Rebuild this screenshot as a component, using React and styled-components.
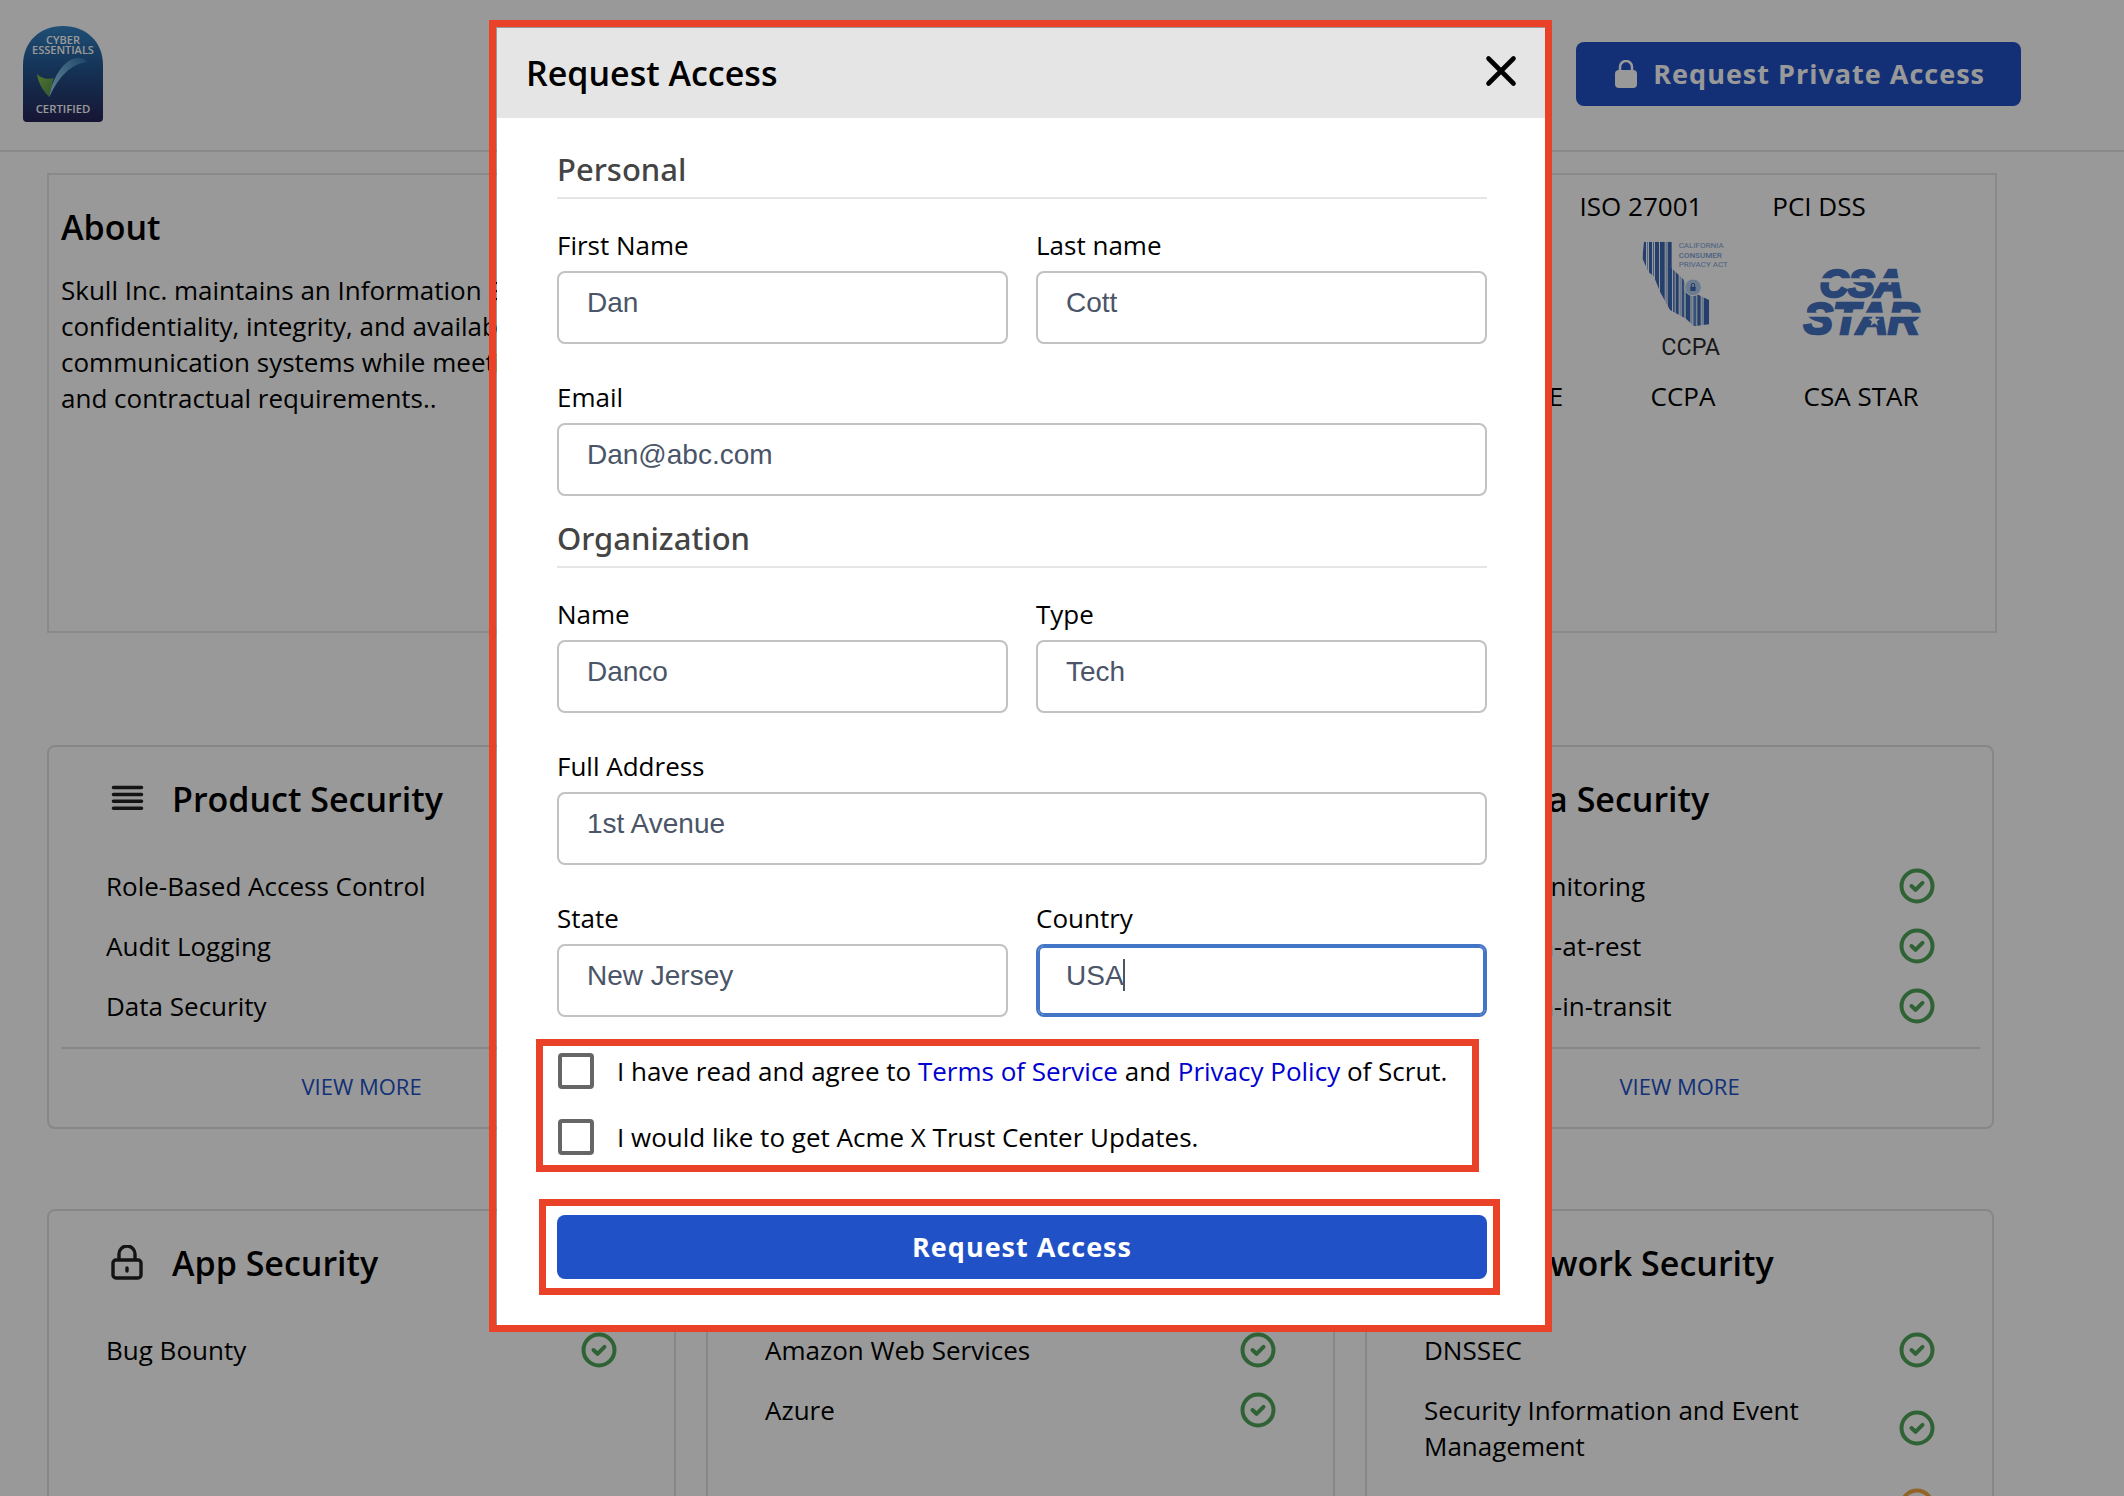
import React from "react";
import styled, { createGlobalStyle } from "styled-components";

const GlobalStyle = createGlobalStyle`
  *, *::before, *::after { box-sizing: border-box; }
  body {
    margin: 0;
    background: #fff;
    color: #000;
    font-family: "Open Sans", "Noto Sans", sans-serif;
    font-size: 26px;
    line-height: 36px;
    overflow: hidden;
  }
  h1, h2, h3, p, ul { margin: 0; padding: 0; }
  button, input { font: inherit; margin: 0; }
  svg { flex-shrink: 0; }
`;

const Page = styled.div`
  height: 100vh;
  overflow: hidden;
`;

/* ---------- top bar ---------- */

const TopBar = styled.header`
  display: flex;
  align-items: center;
  justify-content: space-between;
  padding: 26px 103px 28px 23px;
  border-bottom: 2px solid #e5e5e5;
`;

const PrimaryButton = styled.button`
  display: flex;
  align-items: center;
  justify-content: center;
  gap: 16px;
  width: ${(p) => (p.$block ? "100%" : "auto")};
  height: 64px;
  padding: ${(p) => (p.$block ? "0" : "0 36px 0 39px")};
  border: 0;
  border-radius: 8px;
  background: #2151c6;
  color: #fff;
  font-size: 27px;
  font-weight: 700;
  letter-spacing: 1px;
  cursor: pointer;
`;

/* ---------- page content ---------- */

const Content = styled.main`
  padding: 21px 127px 0 47px;
`;

const Overview = styled.section`
  display: flex;
  justify-content: space-between;
  min-height: 460px;
  margin-bottom: 112px;
  border: 2px solid #e5e5e5;
`;

const About = styled.div`
  padding: 29px 12px;
`;

const Title = styled.h2`
  font-size: 34px;
  line-height: 46px;
  font-weight: 600;
`;

const AboutText = styled.p`
  margin-top: 22px;
`;

const Badges = styled.div`
  display: flex;
  flex-direction: column;
  gap: 16px;
  padding-top: 13px;
`;

const BadgeRow = styled.div`
  display: flex;
  justify-content: flex-end;
  padding-right: ${(p) => (p.$indent ? 87 : 45)}px;
`;

const Badge = styled.div`
  display: flex;
  flex-direction: column;
  align-items: center;
  justify-content: flex-end;
  gap: 18px;
  width: 178px;
`;

const CardGrid = styled.section`
  display: grid;
  grid-template-columns: repeat(3, 1fr);
  gap: 80px 30px;
  padding-right: 3px;
`;

const Card = styled.article`
  padding: 29px 12px 26px;
  min-height: 384px;
  border: 2px solid #e2e2e2;
  border-radius: 8px;
`;

const CardHead = styled.div`
  display: flex;
  align-items: center;
  gap: 27px;
  padding-left: 48px;
  margin-bottom: 46px;
`;

const CardList = styled.ul`
  display: flex;
  flex-direction: column;
  gap: 24px;
  padding: 0 45px;
  list-style: none;
`;

const CardItem = styled.li`
  display: flex;
  align-items: center;
  justify-content: space-between;
  gap: 80px;
`;

const CardFoot = styled.div`
  display: flex;
  justify-content: center;
  margin-top: 23px;
  padding-top: 22px;
  border-top: 2px solid #e2e2e2;
`;

const MoreLink = styled.a`
  color: #2151c6;
  font-size: 22px;
  line-height: 30px;
  text-decoration: none;
`;

/* ---------- dialog ---------- */

const Overlay = styled.div`
  position: fixed;
  inset: 0;
  display: flex;
  justify-content: center;
  align-items: flex-start;
  padding: 20px 83px 0 0;
  background: rgba(0, 0, 0, 0.4);
`;

const Dialog = styled.div`
  width: 1063px;
  max-width: 100%;
  padding: 1px 0 0 1px;
  border: 7px solid #ea4228;
`;

const DialogHead = styled.div`
  display: flex;
  align-items: center;
  justify-content: space-between;
  height: 90px;
  padding: 0 28px 0 29px;
  background: #e5e5e5;
`;

const CloseButton = styled.button`
  display: flex;
  padding: 0 0 4px;
  border: 0;
  background: none;
  cursor: pointer;
`;

const Form = styled.form`
  padding: 29px 58px 30px 60px;
  background: #fff;
`;

const Section = styled.section`
  margin-bottom: 20px;
`;

const SectionTitle = styled.h3`
  margin-bottom: 28px;
  padding-bottom: 6px;
  border-bottom: 2px solid #e5e5e5;
  color: #444;
  font-family: "Noto Sans", "Open Sans", sans-serif;
  font-size: 31px;
  line-height: 44px;
  font-weight: 500;
`;

const Fields = styled.div`
  display: grid;
  grid-template-columns: 1fr 1fr;
  gap: 35px 28px;
`;

const Field = styled.div`
  display: flex;
  flex-direction: column;
  gap: 8px;
  grid-column: ${(p) => (p.$wide ? "1 / -1" : "auto")};
`;

const InputWrap = styled.div`
  position: relative;
  display: flex;
`;

const Input = styled.input`
  width: 100%;
  height: 73px;
  padding: 0 28px 10px;
  border: 2px solid ${(p) => (p.$active ? "#4275c5" : "#c2c2c2")};
  border-radius: 8px;
  outline: 0;
  box-shadow: ${(p) => (p.$active ? "inset 0 0 0 2px #4275c5" : "none")};
  background: #fff;
  color: #4a5568;
  font-family: "Liberation Sans", Arial, sans-serif;
  font-size: 28px;
`;

const Caret = styled.span`
  position: absolute;
  top: 15px;
  left: 87px;
  width: 2px;
  height: 32px;
  background: #4a5568;
`;

const Consents = styled.div`
  display: flex;
  flex-direction: column;
  gap: 30px;
  margin: 22px 8px 27px -21px;
  padding: 7px 0 10px 15px;
  border: 7px solid #ea4228;
`;

const Consent = styled.div`
  display: flex;
  align-items: center;
  gap: 23px;
`;

const Checkbox = styled.input`
  appearance: none;
  width: 36px;
  height: 36px;
  border: 4px solid #666;
  border-radius: 4px;
  background: #fff;
`;

const PolicyLink = styled.a`
  color: #0000d0;
  text-decoration: none;
`;

const SubmitFrame = styled.div`
  margin: 0 -13px 0 -18px;
  padding: 9px 6px 9px 11px;
  border: 7px solid #ea4228;
`;

/* ---------- drawings ---------- */

function CyberEssentials() {
  return (
    <svg width="80" height="96" viewBox="0 0 240 288" role="img" aria-label="Cyber Essentials Certified">
      <defs>
        <linearGradient id="ce-bg" x1="0" y1="0" x2="0" y2="1">
          <stop offset="0" stopColor="#3584c4" />
          <stop offset="0.45" stopColor="#22558f" />
          <stop offset="1" stopColor="#262457" />
        </linearGradient>
        <linearGradient id="ce-swoosh" x1="0" y1="1" x2="1" y2="0">
          <stop offset="0" stopColor="#a5d3f0" />
          <stop offset="0.5" stopColor="#6fb0dc" />
          <stop offset="1" stopColor="#3273ac" />
        </linearGradient>
        <linearGradient id="ce-leaf" x1="0" y1="0" x2="1" y2="1">
          <stop offset="0" stopColor="#8cc152" />
          <stop offset="1" stopColor="#4b8f4a" />
        </linearGradient>
      </defs>
      <path d="M0 118C0 46 52 0 120 0s120 46 120 118v158q0 12-12 12H12q-12 0-12-12z" fill="url(#ce-bg)" />
      <g fill="#fff" fontFamily="Open Sans, sans-serif" fontWeight="600" textAnchor="middle">
        <text x="120" y="54" fontSize="33">CYBER</text>
        <text x="120" y="83" fontSize="33">ESSENTIALS</text>
        <text x="120" y="261" fontSize="34">CERTIFIED</text>
      </g>
      <path d="M42 144C56 158 74 161 92 156L79 214C60 194 46 172 42 144z" fill="url(#ce-leaf)" />
      <path d="M79 214C84 178 98 142 126 114C150 92 174 88 194 108C148 112 108 148 79 214z" fill="url(#ce-swoosh)" />
    </svg>
  );
}

const STRIPES = [
  [127, 11, "#3d69b4"], [141, 3, "#8aaee0"], [147, 9, "#3d69b4"], [159, 3, "#6d95d2"],
  [165, 12, "#3d69b4"], [180, 14, "#3d69b4"], [197, 3, "#7fa5dc"], [203, 13, "#3d69b4"],
  [219, 5, "#4f7cc4"], [227, 9, "#3d69b4"], [239, 3, "#8aaee0"], [245, 8, "#4f7cc4"],
  [257, 14, "#3d69b4"], [274, 3, "#8aaee0"], [280, 9, "#5d88cc"], [292, 10, "#3d69b4"],
  [305, 3, "#8aaee0"], [311, 16, "#3d69b4"],
];

function CcpaLogo() {
  return (
    <svg width="110" height="120" viewBox="84 60 330 360" role="img" aria-label="California Consumer Privacy Act">
      <defs>
        <clipPath id="california">
          <path d="M132 65H215V145L250 178L265 215L298 226L327 240V313L282 319L258 296L210 270L180 215L162 170L145 155L127 115z" />
        </clipPath>
      </defs>
      <g clipPath="url(#california)">
        {STRIPES.map(([x, w, c]) => (
          <rect key={x} x={x} y="60" width={w} height="262" fill={c} />
        ))}
      </g>
      <circle cx="279" cy="202" r="25" fill="#b3cdf0" stroke="#fff" strokeWidth="3" />
      <rect x="271" y="200" width="16" height="13" rx="2" fill="#3d69b4" />
      <path d="M274 201v-6a5 5 0 0 1 10 0v6" fill="none" stroke="#3d69b4" strokeWidth="3" />
      <g fill="#7ea3d8" fontFamily="Roboto, sans-serif" fontSize="24">
        <text x="236" y="85">CALIFORNIA</text>
        <text x="236" y="113" fontWeight="500">CONSUMER</text>
        <text x="236" y="141">PRIVACY ACT</text>
      </g>
      <text x="272" y="406" textAnchor="middle" fill="#2b2b2f" fontFamily="Roboto, sans-serif" fontSize="70">CCPA</text>
    </svg>
  );
}

function CsaStarLogo() {
  return (
    <svg width="120" height="120" viewBox="603 60 360 360" overflow="visible" role="img" aria-label="CSA STAR">
      <g fill="#4474c4" stroke="#4474c4" strokeWidth="8" fontFamily="Liberation Sans, Arial, sans-serif" fontWeight="700" fontStyle="italic" textAnchor="middle">
        <text x="784" y="231" fontSize="118">CSA</text>
        <text x="785" y="341" fontSize="131">STAR</text>
      </g>
      <path d="M655 181H915M600 284H975" stroke="#fff" strokeWidth="12" />
      <path d="M823 284l4.500 12 13 .5-10 8 3.500 12.500-11-7-11 7 3.500-12.500-10-8 13-.5z" fill="#fff" />
    </svg>
  );
}

function LinesIcon() {
  return (
    <svg width="36" height="36" viewBox="0 0 36 36" aria-hidden="true">
      <path d="M4.500 6.500h28M4.500 13.500h28M4.500 20.300h28M4.500 27.200h28" stroke="#222" strokeWidth="3.600" strokeLinecap="round" />
    </svg>
  );
}

function PadlockIcon() {
  return (
    <svg width="36" height="36" viewBox="0 0 36 36" fill="none" stroke="#222" strokeWidth="3.400" aria-hidden="true">
      <rect x="4" y="15" width="28" height="18" rx="3" />
      <path d="M10 15V9a8 8 0 0 1 16 0v6" />
      <path d="M18 23v3" strokeLinecap="round" />
    </svg>
  );
}

function SolidLockIcon() {
  return (
    <svg width="22" height="28" viewBox="0 0 22 28" aria-hidden="true">
      <rect x="0" y="10" width="22" height="18" rx="4" fill="#fff" />
      <path d="M5 12V7a6 6 0 0 1 12 0v5" fill="none" stroke="#fff" strokeWidth="2.500" />
    </svg>
  );
}

function StatusIcon({ warn }) {
  const color = warn ? "#f5a742" : "#4fa457";
  return (
    <svg width="36" height="36" viewBox="0 0 36 36" fill="none" stroke={color} strokeWidth="4" role="img" aria-label={warn ? "In progress" : "Done"}>
      <circle cx="18" cy="18" r="15.500" />
      <path d="M12.500 18l4 3.800 7-7" strokeLinecap="round" strokeLinejoin="round" />
    </svg>
  );
}

function CloseIcon() {
  return (
    <svg width="32" height="32" viewBox="0 0 32 32" aria-hidden="true">
      <path d="M3.500 3.500l25 25M28.500 3.500l-25 25" stroke="#000" strokeWidth="4.600" strokeLinecap="round" />
    </svg>
  );
}

/* ---------- data ---------- */

const CARDS = [
  { title: "Product Security", icon: LinesIcon, more: true, items: [["Role-Based Access Control"], ["Audit Logging"], ["Data Security"]] },
  { title: "Cloud Security", icon: LinesIcon, more: true, items: [["Backups"], ["Firewall"], ["Logging"]] },
  { title: "Data Security", icon: LinesIcon, more: true, items: [["Access Monitoring"], ["Encryption-at-rest"], ["Encryption-in-transit"]] },
  { title: "App Security", icon: PadlockIcon, items: [["Bug Bounty"]] },
  { title: "Infrastructure", icon: PadlockIcon, items: [["Amazon Web Services"], ["Azure"]] },
  { title: "Network Security", icon: PadlockIcon, items: [["DNSSEC"], ["Security Information and Event Management"], ["Traffic Filtering", true]] },
];

function SecurityCard({ card }) {
  const Icon = card.icon;
  return (
    <Card>
      <CardHead>
        <Icon />
        <Title>{card.title}</Title>
      </CardHead>
      <CardList>
        {card.items.map(([label, warn]) => (
          <CardItem key={label}>
            {label}
            <StatusIcon warn={warn} />
          </CardItem>
        ))}
      </CardList>
      {card.more && (
        <CardFoot>
          <MoreLink href="#more">VIEW MORE</MoreLink>
        </CardFoot>
      )}
    </Card>
  );
}

function TextField({ id, label, value, wide, active }) {
  return (
    <Field $wide={wide}>
      <label htmlFor={id}>{label}</label>
      <InputWrap>
        <Input id={id} type="text" defaultValue={value} $active={active} />
        {active && <Caret />}
      </InputWrap>
    </Field>
  );
}

export default function App() {
  return (
    <>
      <GlobalStyle />
      <Page>
        <TopBar>
          <CyberEssentials />
          <PrimaryButton type="button">
            <SolidLockIcon />
            Request Private Access
          </PrimaryButton>
        </TopBar>
        <Content>
          <Overview>
            <About>
              <Title>About</Title>
              <AboutText>
                Skull Inc. maintains an Information Security program to ensure the
                <br />
                confidentiality, integrity, and availability of its information and
                <br />
                communication systems while meeting its legal, regulatory
                <br />
                and contractual requirements..
              </AboutText>
            </About>
            <Badges>
              <BadgeRow $indent>
                <Badge>ISO 27001</Badge>
                <Badge>PCI DSS</Badge>
              </BadgeRow>
              <BadgeRow>
                <Badge>SOC TYPE</Badge>
                <Badge>
                  <CcpaLogo />
                  CCPA
                </Badge>
                <Badge>
                  <CsaStarLogo />
                  CSA STAR
                </Badge>
              </BadgeRow>
            </Badges>
          </Overview>
          <CardGrid>
            {CARDS.map((card) => (
              <SecurityCard key={card.title} card={card} />
            ))}
          </CardGrid>
        </Content>
      </Page>

      <Overlay>
        <Dialog role="dialog" aria-modal="true" aria-labelledby="dialog-title">
          <DialogHead>
            <Title id="dialog-title">Request Access</Title>
            <CloseButton type="button" aria-label="Close">
              <CloseIcon />
            </CloseButton>
          </DialogHead>
          <Form onSubmit={(e) => e.preventDefault()}>
            <Section>
              <SectionTitle>Personal</SectionTitle>
              <Fields>
                <TextField id="first" label="First Name" value="Dan" />
                <TextField id="last" label="Last name" value="Cott" />
                <TextField id="email" label="Email" value="Dan@abc.com" wide />
              </Fields>
            </Section>
            <Section>
              <SectionTitle>Organization</SectionTitle>
              <Fields>
                <TextField id="org" label="Name" value="Danco" />
                <TextField id="type" label="Type" value="Tech" />
                <TextField id="address" label="Full Address" value="1st Avenue" wide />
                <TextField id="state" label="State" value="New Jersey" />
                <TextField id="country" label="Country" value="USA" active />
              </Fields>
            </Section>
            <Consents>
              <Consent>
                <Checkbox type="checkbox" id="terms" />
                <label htmlFor="terms">
                  I have read and agree to <PolicyLink href="#terms">Terms of Service</PolicyLink> and{" "}
                  <PolicyLink href="#privacy">Privacy Policy</PolicyLink> of Scrut.
                </label>
              </Consent>
              <Consent>
                <Checkbox type="checkbox" id="updates" />
                <label htmlFor="updates">I would like to get Acme X Trust Center Updates.</label>
              </Consent>
            </Consents>
            <SubmitFrame>
              <PrimaryButton type="submit" $block>
                Request Access
              </PrimaryButton>
            </SubmitFrame>
          </Form>
        </Dialog>
      </Overlay>
    </>
  );
}
